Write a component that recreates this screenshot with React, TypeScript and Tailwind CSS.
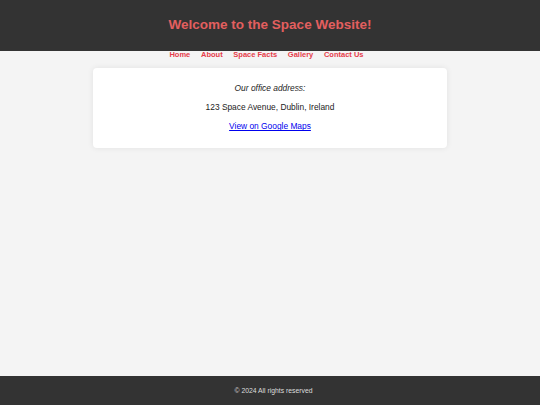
import React from "react";

export default function App() {
  const links = ["Home", "About", "Space Facts", "Gallery", "Contact Us"];
  return (
    <div
      className="min-h-screen flex flex-col bg-[#f4f4f4] text-[#222]"
      style={{ fontFamily: '"Liberation Sans", Arial, sans-serif' }}
    >
      <header className="h-[50.5px] bg-[#333333] flex items-center justify-center">
        <h1 className="text-[13.5px] font-bold leading-[16px] text-[#e35f5f]">
          Welcome to the Space Website!
        </h1>
      </header>
      <nav className="flex justify-center gap-[10.7px] pt-[0.5px] pr-[7px]">
        {links.map((l) => (
          <a
            key={l}
            href="#"
            className="text-[7.5px] font-bold leading-[8.6px] text-[#e63c4a]"
          >
            {l}
          </a>
        ))}
      </nav>
      <main className="flex-1 pt-[8.4px]">
        <section className="w-[354px] mx-auto bg-white rounded-[4px] shadow-[0_0_6px_rgba(0,0,0,0.08)] pt-[16.4px] pb-[16.4px] flex flex-col items-center gap-[9.3px] text-[8.4px] leading-[9.7px]">
          <p className="italic">Our office address:</p>
          <p>123 Space Avenue, Dublin, Ireland</p>
          <a href="#" className="text-[#0000ee] underline">
            View on Google Maps
          </a>
        </section>
      </main>
      <footer className="h-[29.5px] bg-[#333333] flex items-center justify-center pt-[1px] pl-[7px]">
        <p className="text-[6.8px] leading-[7.7px] text-[#dddddd]">
          © 2024 All rights reserved
        </p>
      </footer>
    </div>
  );
}
